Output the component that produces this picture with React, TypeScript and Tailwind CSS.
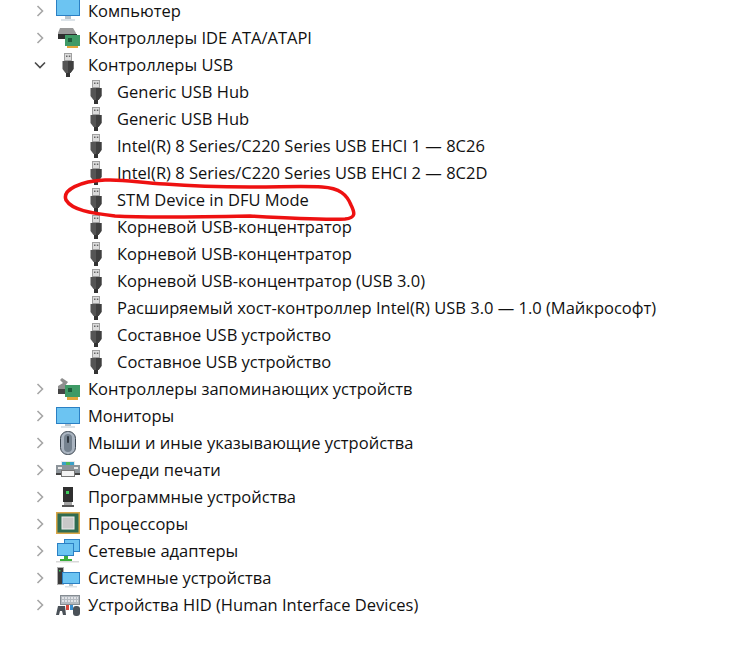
import { ReactNode } from "react";

type IconName = "pc" | "ide" | "usb" | "storage" | "monitor" | "mouse" | "printer" | "firmware" | "cpu" | "network" | "system" | "hid";

function Screen({ x = 0, y = 0, w = 24, h = 15 }: { x?: number; y?: number; w?: number; h?: number }) {
  return (
    <g>
      <rect x={x} y={y} width={w} height={h} fill="#2b80c4" />
      <rect x={x + 1} y={y + 1} width={w - 2} height={h - 2} fill="#6cc4f2" />
    </g>
  );
}

function UsbPlug() {
  return (
    <svg width={12} height={24} viewBox="0 0 12 24">
      <rect x="2.5" y="0.5" width="7" height="7" fill="#dcdcdc" stroke="#a0a0a0" />
      <rect x="4" y="2.5" width="1.5" height="1.5" fill="#666" />
      <rect x="6.8" y="2.5" width="1.5" height="1.5" fill="#666" />
      <path d="M0.5 8h11v8l-3 4h-5l-3-4z" fill="#555" />
      <path d="M6 8h5.500v8l-3 4H6z" fill="#3f3f3f" />
      <rect x="4" y="20" width="4" height="4" fill="#333" />
    </svg>
  );
}

function DeviceIcon({ name }: { name: IconName }) {
  if (name === "usb") return <UsbPlug />;

  const drawings: Record<Exclude<IconName, "usb">, ReactNode> = {
    pc: (
      <>
        <Screen y={0} h={17} />
        <rect x="9" y="17" width="6" height="3" fill="#b8c4cc" />
        <rect x="5" y="20" width="14" height="2" fill="#dce3e8" />
      </>
    ),
    monitor: (
      <>
        <Screen y={3} h={17} />
        <rect x="9" y="20" width="6" height="2" fill="#b8c4cc" />
        <rect x="5" y="22" width="14" height="2" fill="#dce3e8" />
      </>
    ),
    ide: (
      <>
        <path d="M4 2h13l3 5v3H2V7z" fill="#9a9a9a" />
        <rect x="2" y="8" width="19" height="5" fill="#2f2f2f" />
        <rect x="9" y="9" width="15" height="11" fill="#3f9a66" />
        <rect x="12" y="12" width="4" height="4" fill="#1f5c3c" />
        <rect x="11" y="20" width="11" height="2" fill="#e2a53a" />
      </>
    ),
    storage: (
      <>
        <path d="M6 1l6 4-3 4 3 3H2V9l5-3-3-3z" fill="#8f8f8f" />
        <rect x="2" y="12" width="8" height="5" fill="#444" />
        <rect x="9" y="8" width="15" height="12" fill="#3f9a66" />
        <rect x="12" y="11" width="4" height="4" fill="#1f5c3c" />
        <rect x="11" y="20" width="11" height="3" fill="#e2a53a" />
      </>
    ),
    mouse: (
      <>
        <rect x="4.500" y="0.500" width="15" height="23" rx="7" fill="#aab4c0" stroke="#3c4650" />
        <rect x="8" y="3" width="8" height="18" rx="4" fill="#75828f" />
        <rect x="11" y="5" width="2" height="7" rx="1" fill="#2f3740" />
      </>
    ),
    printer: (
      <>
        <rect x="5" y="3" width="14" height="5" fill="#e8e8e8" />
        <rect x="6" y="4" width="12" height="3" fill="#3aa0c8" />
        <rect x="10" y="4" width="4" height="3" fill="#4fb85c" />
        <rect x="0" y="7" width="24" height="9" fill="#8d949a" />
        <rect x="2" y="9" width="4" height="2" fill="#e8e8e8" />
        <rect x="18" y="9" width="4" height="2" fill="#e8e8e8" />
        <rect x="5.500" y="12.500" width="13" height="6" fill="#f4f4f4" stroke="#777" />
        <rect x="0" y="15" width="5" height="2" fill="#444" />
        <rect x="19" y="15" width="5" height="2" fill="#444" />
      </>
    ),
    firmware: (
      <>
        <rect x="7" y="2" width="10" height="15" fill="#2f2f2f" />
        <rect x="10" y="6" width="3" height="3" fill="#3ecb5a" />
        <rect x="8" y="17" width="8" height="3" fill="#a5a5a5" />
        <rect x="6" y="20" width="12" height="2" fill="#555" />
      </>
    ),
    cpu: (
      <>
        <rect x="0" y="0" width="24" height="22" fill="#d9a648" />
        <rect x="1.500" y="1.500" width="21" height="19" fill="#2f6b50" />
        <rect x="6" y="5" width="12" height="12" fill="#c8c8c8" stroke="#efefef" />
      </>
    ),
    network: (
      <>
        <Screen x={8} y={0} w={16} h={13} />
        <Screen x={1} y={4} w={17} h={13} />
        <rect x="8" y="17" width="4" height="3" fill="#3cad3c" />
        <rect x="4" y="20" width="12" height="2" fill="#3cad3c" />
        <rect x="0" y="22" width="23" height="1.500" fill="#d8d8d8" />
      </>
    ),
    system: (
      <>
        <rect x="1" y="1" width="7" height="18" fill="#b0b0b0" />
        <rect x="2" y="2" width="5" height="16" fill="#3a3a3a" />
        <rect x="3" y="4" width="1.500" height="1.500" fill="#3ecb5a" />
        <Screen x={6} y={6} w={18} h={12} />
        <rect x="13" y="18" width="4" height="2" fill="#b8c4cc" />
        <rect x="9" y="20" width="12" height="1.500" fill="#dce3e8" />
      </>
    ),
    hid: (
      <>
        <rect x="4.500" y="2.500" width="19" height="9" fill="#b4bac0" stroke="#858c92" />
        <path d="M6 5h16M6 8h16" stroke="#eef0f2" strokeWidth="1.500" strokeDasharray="2 1" />
        <path d="M0 22l2-9h7l1 9H7l-1-4H4l-1 4z" fill="#4a5158" />
        <rect x="10" y="12" width="3" height="5" fill="#d8483c" />
        <rect x="14" y="12" width="3" height="5" fill="#3a8fd0" />
        <rect x="17" y="13" width="7" height="10" rx="3" fill="#4a5158" />
      </>
    ),
  };

  return (
    <svg width={24} height={24} viewBox="0 0 24 24">
      {drawings[name]}
    </svg>
  );
}

function Chevron({ open }: { open?: boolean }) {
  return (
    <svg width={12} height={12} viewBox="0 0 12 12" fill="none">
      {open ? (
        <path d="M1 3.500l5 5 5-5" stroke="#4a4a4a" strokeWidth="1.600" />
      ) : (
        <path d="M3.500 1l5 5-5 5" stroke="#a6a6a6" strokeWidth="1.600" />
      )}
    </svg>
  );
}

function CategoryRow({ icon, label, open }: { icon: IconName; label: string; open?: boolean }) {
  return (
    <div className="flex h-[27px] items-center pl-[34px]">
      <div className="flex w-[22px] shrink-0 items-center">
        <Chevron open={open} />
      </div>
      <div className="flex w-[32px] shrink-0 justify-center pr-2">
        <DeviceIcon name={icon} />
      </div>
      <span className="whitespace-nowrap">{label}</span>
    </div>
  );
}

function UsbRow({ label }: { label: string }) {
  return (
    <div className="flex h-[27px] items-center pl-[90px]">
      <div className="flex w-[27px] shrink-0">
        <UsbPlug />
      </div>
      <span className="whitespace-nowrap">{label}</span>
    </div>
  );
}

const usbDevices = [
  "Generic USB Hub",
  "Generic USB Hub",
  "Intel(R) 8 Series/C220 Series USB EHCI 1 — 8C26",
  "Intel(R) 8 Series/C220 Series USB EHCI 2 — 8C2D",
  "STM Device in DFU Mode",
  "Корневой USB-концентратор",
  "Корневой USB-концентратор",
  "Корневой USB-концентратор (USB 3.0)",
  "Расширяемый хост-контроллер Intel(R) USB 3.0 — 1.0 (Майкрософт)",
  "Составное USB устройство",
  "Составное USB устройство",
];

const lowerCategories: { icon: IconName; label: string }[] = [
  { icon: "storage", label: "Контроллеры запоминающих устройств" },
  { icon: "monitor", label: "Мониторы" },
  { icon: "mouse", label: "Мыши и иные указывающие устройства" },
  { icon: "printer", label: "Очереди печати" },
  { icon: "firmware", label: "Программные устройства" },
  { icon: "cpu", label: "Процессоры" },
  { icon: "network", label: "Сетевые адаптеры" },
  { icon: "system", label: "Системные устройства" },
  { icon: "hid", label: "Устройства HID (Human Interface Devices)" },
];

export default function App() {
  return (
    <div className="relative h-[655px] w-[743px] overflow-hidden bg-white font-['Open_Sans','Noto_Sans',sans-serif] text-[16.5px] leading-[20px] text-[#111111]">
      <div className="-mt-[3px] flex flex-col">
        <CategoryRow icon="pc" label="Компьютер" />
        <CategoryRow icon="ide" label="Контроллеры IDE ATA/ATAPI" />
        <CategoryRow icon="usb" label="Контроллеры USB" open />
        {usbDevices.map((label, i) => (
          <UsbRow key={i} label={label} />
        ))}
        {lowerCategories.map((c) => (
          <CategoryRow key={c.label} icon={c.icon} label={c.label} />
        ))}
      </div>

      {/* hand drawn red circle round the DFU device */}
      <svg className="pointer-events-none absolute left-0 top-0" width={743} height={655} fill="none">
        <path
          d="M105 180C125 179 140 183 165 184C190 186 215 187 250 187C280 187 305 186 322 187C340 188 347 195 351 205C355 213 356 218 345 219C320 220 285 218 250 216C200 217 150 218 115 216C90 213 72 210 66 200C62 190 80 181 105 180Z"
          stroke="#ee1111"
          strokeWidth="3.500"
          strokeLinejoin="round"
        />
      </svg>
    </div>
  );
}
